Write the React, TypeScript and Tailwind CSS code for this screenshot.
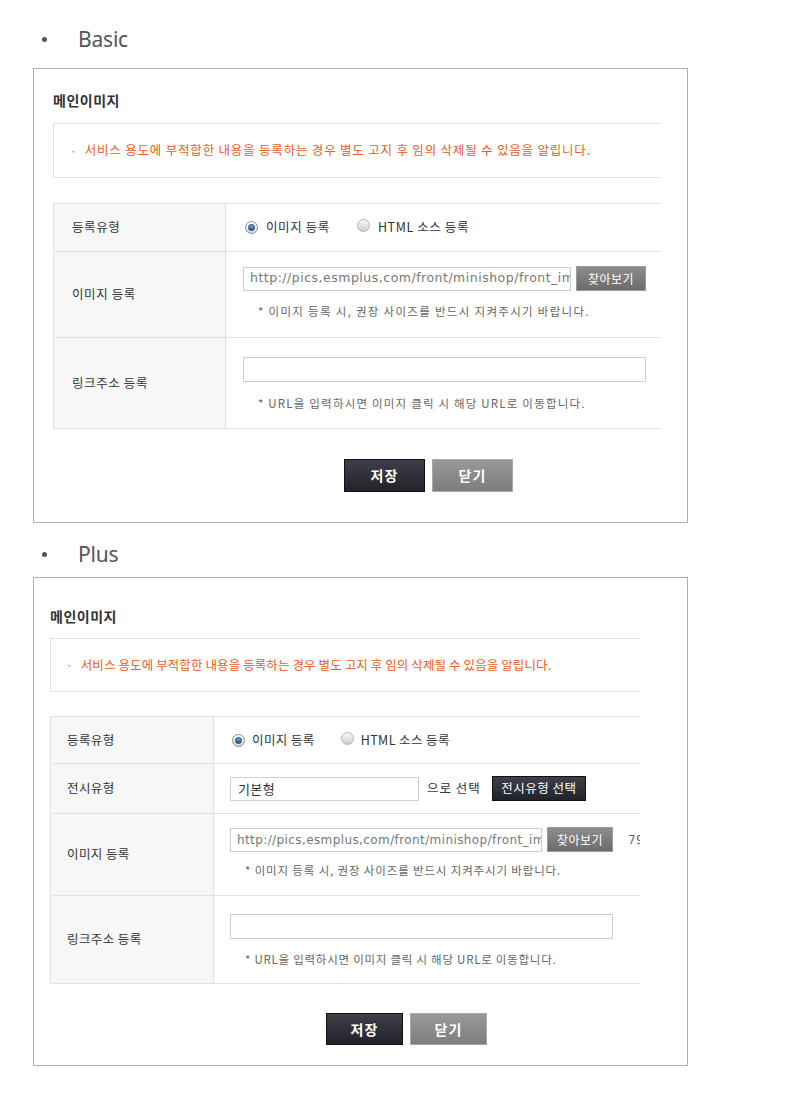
import React from "react";

const KR = { fontFamily: '"Noto Sans CJK KR", "Noto Sans", sans-serif' };
const URLF = { fontFamily: '"DejaVu Sans", sans-serif' };

function Radio({ checked }: { checked: boolean }) {
  if (checked) {
    return (
      <span className="relative inline-flex h-[13px] w-[13px] items-center justify-center rounded-full border border-[#8f8f8f] bg-gradient-to-b from-[#ffffff] to-[#d6d6d6]">
        <span className="h-[7px] w-[7px] rounded-full border border-[#1b3f66] bg-gradient-to-b from-[#6fb0e8] to-[#1f5a9a]" />
      </span>
    );
  }
  return (
    <span className="inline-block h-[13px] w-[13px] rounded-full border border-[#b3b3b3] bg-gradient-to-b from-[#fafafa] to-[#cfcfcf]" />
  );
}

function Heading({ text }: { text: string }) {
  return (
    <div className="flex h-[30px] items-center text-[#555]">
      <span className="ml-[42px] inline-block h-[5px] w-[5px] rounded-full bg-[#555]" />
      <span
        className="ml-[31px] text-[21px] leading-none tracking-[-0.2px]"
        style={{ fontFamily: '"Noto Sans", sans-serif' }}
      >
        {text}
      </span>
    </div>
  );
}

function Notice({ h, dotPl, tr }: { h: string; dotPl: string; tr: string }) {
  return (
    <div className={`flex items-center border-y border-l border-[#e2e2e2] ${h} ${dotPl}`}>
      <span className="mr-[8px] text-[12px] text-[#888]">·</span>
      <span className={`whitespace-nowrap text-[12.5px] text-[#f05a1a] ${tr}`}>
        서비스 용도에 부적합한 내용을 등록하는 경우 별도 고지 후 임의 삭제될 수 있음을 알립니다.
      </span>
    </div>
  );
}

function SaveButtons({ w, h }: { w: string; h: string }) {
  return (
    <div className="flex gap-[7px]">
      <button
        className={`${w} ${h} border border-[#111] bg-gradient-to-b from-[#3e3f48] to-[#22232a] text-[14px] font-bold tracking-[1px] text-white`}
      >
        저장
      </button>
      <button
        className={`${w} ${h} border border-[#a8a8a8] bg-gradient-to-b from-[#999999] to-[#7d7d7d] text-[14px] font-bold tracking-[1px] text-white`}
      >
        닫기
      </button>
    </div>
  );
}

function FindButton({ w }: { w: string }) {
  return (
    <button
      className={`${w} h-[25px] shrink-0 border border-[#9a9a9a] bg-gradient-to-b from-[#8d8d8d] to-[#6c6c6c] text-[12px] tracking-[0.5px] text-white`}
    >
      찾아보기
    </button>
  );
}

function HelpText({ children, tr }: { children: React.ReactNode; tr: string }) {
  return <div className={`whitespace-nowrap text-[11.5px] text-[#666] ${tr}`}>{children}</div>;
}

export default function App() {
  return (
    <div className="min-h-[1096px] w-[802px] bg-white text-[#333]" style={KR}>
      <div className="h-[24px]" />
      <Heading text="Basic" />

      {/* Basic box */}
      <div className="mt-[14px] ml-[33px] h-[455px] w-[655px] border border-[#b0b0b0] pl-[19px] pt-[22px]">
        <div className="w-[608px] overflow-hidden">
          <div className="flex h-[18px] items-center text-[14px] font-bold tracking-[0.5px] text-[#333]">메인이미지</div>
          <div className="mt-[14px]">
            <Notice h="h-[55px]" dotPl="pl-[16px]" tr="tracking-[0.8px]" />
          </div>

          <div className="mt-[25px] border-b border-l border-[#e2e2e2] text-[12.5px] tracking-[0.6px]">
            {/* row 1 */}
            <div className="flex h-[48px] border-t border-[#e2e2e2]">
              <div className="flex w-[172px] shrink-0 items-center border-r border-[#e2e2e2] bg-[#f7f7f7] pl-[18px]">
                등록유형
              </div>
              <div className="flex items-center pl-[19px]">
                <Radio checked />
                <span className="ml-[8px]">이미지 등록</span>
                <span className="ml-[27px]">
                  <Radio checked={false} />
                </span>
                <span className="ml-[8px]">HTML 소스 등록</span>
              </div>
            </div>
            {/* row 2 */}
            <div className="flex h-[86px] border-t border-[#e2e2e2]">
              <div className="flex w-[172px] shrink-0 items-center border-r border-[#e2e2e2] bg-[#f7f7f7] pl-[18px]">
                이미지 등록
              </div>
              <div className="flex flex-col pl-[17px] pt-[14px]">
                <div className="flex items-center gap-[5px]">
                  <div
                    className="flex h-[24px] w-[328px] items-center overflow-hidden whitespace-nowrap border border-[#cfcfcf] px-[6px] text-[12.5px] tracking-[0.5px] text-[#777]"
                    style={URLF}
                  >
                    http://pics,esmplus,com/front/minishop/front_img
                  </div>
                  <FindButton w="w-[70px]" />
                </div>
                <div className="mt-[12px] pl-[15px]">
                  <HelpText tr="tracking-[1.3px]">* 이미지 등록 시, 권장 사이즈를 반드시 지켜주시기 바랍니다.</HelpText>
                </div>
              </div>
            </div>
            {/* row 3 */}
            <div className="flex h-[91px] border-t border-[#e2e2e2]">
              <div className="flex w-[172px] shrink-0 items-center border-r border-[#e2e2e2] bg-[#f7f7f7] pl-[18px]">
                링크주소 등록
              </div>
              <div className="flex flex-col pl-[17px] pt-[19px]">
                <div className="h-[25px] w-[403px] border border-[#cfcfcf]" />
                <div className="mt-[13px] pl-[15px]">
                  <HelpText tr="tracking-[1.2px]">* URL을 입력하시면 이미지 클릭 시 해당 URL로 이동합니다.</HelpText>
                </div>
              </div>
            </div>
          </div>

          <div className="mt-[30px] pl-[291px]">
            <SaveButtons w="w-[81px]" h="h-[33px]" />
          </div>
        </div>
      </div>

      <div className="mt-[16px]">
        <Heading text="Plus" />
      </div>

      {/* Plus box */}
      <div className="mt-[8px] ml-[33px] h-[489px] w-[655px] border border-[#b0b0b0] pl-[16px] pt-[29px]">
        <div className="w-[590px] overflow-hidden">
          <div className="flex h-[18px] items-center text-[14px] font-bold tracking-[0.5px] text-[#333]">메인이미지</div>
          <div className="mt-[13px]">
            <Notice h="h-[54px]" dotPl="pl-[15px]" tr="tracking-[0.1px]" />
          </div>

          <div className="mt-[24px] border-b border-l border-[#e2e2e2] text-[12.5px] tracking-[0.4px]">
            {/* row 1 */}
            <div className="flex h-[47px] border-t border-[#e2e2e2]">
              <div className="flex w-[163px] shrink-0 items-center border-r border-[#e2e2e2] bg-[#f7f7f7] pl-[16px]">
                등록유형
              </div>
              <div className="flex items-center pl-[18px]">
                <Radio checked />
                <span className="ml-[7px]">이미지 등록</span>
                <span className="ml-[26px]">
                  <Radio checked={false} />
                </span>
                <span className="ml-[7px]">HTML 소스 등록</span>
              </div>
            </div>
            {/* row 2 */}
            <div className="flex h-[50px] border-t border-[#e2e2e2]">
              <div className="flex w-[163px] shrink-0 items-center border-r border-[#e2e2e2] bg-[#f7f7f7] pl-[16px]">
                전시유형
              </div>
              <div className="flex items-center pl-[16px]">
                <div className="flex h-[24px] w-[189px] items-center border border-[#cfcfcf] px-[7px] text-[13px] text-[#333]">
                  기본형
                </div>
                <span className="ml-[8px] tracking-[1px]">으로 선택</span>
                <button className="ml-[11px] h-[25px] w-[94px] border border-[#111] bg-gradient-to-b from-[#3e3f48] to-[#22232a] text-[12.5px] tracking-[0.5px] text-white">
                  전시유형 선택
                </button>
              </div>
            </div>
            {/* row 3 */}
            <div className="flex h-[82px] border-t border-[#e2e2e2]">
              <div className="flex w-[163px] shrink-0 items-center border-r border-[#e2e2e2] bg-[#f7f7f7] pl-[16px]">
                이미지 등록
              </div>
              <div className="flex flex-col pl-[16px] pt-[13px]">
                <div className="flex items-center">
                  <div
                    className="flex h-[24px] w-[312px] shrink-0 items-center overflow-hidden whitespace-nowrap border border-[#cfcfcf] px-[6px] text-[12px] tracking-[0.4px] text-[#777]"
                    style={URLF}
                  >
                    http://pics,esmplus,com/front/minishop/front_img
                  </div>
                  <span className="ml-[5px]">
                    <FindButton w="w-[66px]" />
                  </span>
                  <span className="ml-[15px] whitespace-nowrap text-[12px] text-[#666]" style={URLF}>
                    790 x 300
                  </span>
                </div>
                <div className="mt-[10px] pl-[15px]">
                  <HelpText tr="tracking-[0.85px]">* 이미지 등록 시, 권장 사이즈를 반드시 지켜주시기 바랍니다.</HelpText>
                </div>
              </div>
            </div>
            {/* row 4 */}
            <div className="flex h-[88px] border-t border-[#e2e2e2]">
              <div className="flex w-[163px] shrink-0 items-center border-r border-[#e2e2e2] bg-[#f7f7f7] pl-[16px]">
                링크주소 등록
              </div>
              <div className="flex flex-col pl-[16px] pt-[18px]">
                <div className="h-[25px] w-[383px] border border-[#cfcfcf]" />
                <div className="mt-[12px] pl-[15px]">
                  <HelpText tr="tracking-[0.75px]">* URL을 입력하시면 이미지 클릭 시 해당 URL로 이동합니다.</HelpText>
                </div>
              </div>
            </div>
          </div>

          <div className="mt-[29px] pl-[276px]">
            <SaveButtons w="w-[77px]" h="h-[32px]" />
          </div>
        </div>
      </div>
    </div>
  );
}
